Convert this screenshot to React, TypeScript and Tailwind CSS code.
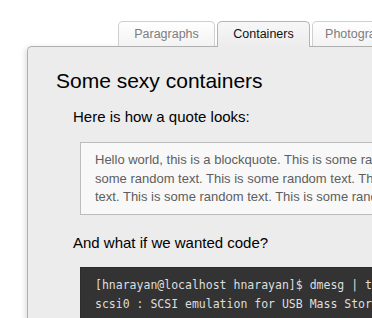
import React from 'react';

const tabs = [
  { label: 'Paragraphs', active: false, w: 'w-[97px]' },
  { label: 'Containers', active: true, w: 'w-[93px]' },
  { label: 'Photographs', active: false, w: 'w-[97px]' },
];

const quoteLines = [
  'Hello world, this is a blockquote. This is some random text. This is',
  'some random text. This is some random text. This is some random',
  'text. This is some random text. This is some random text.',
];

const codeLines = [
  '[hnarayan@localhost hnarayan]$ dmesg | tail',
  'scsi0 : SCSI emulation for USB Mass Storage devices',
];

export default function App() {
  return (
    <div className="w-[372px] h-[318px] overflow-hidden bg-white pt-[21px] pl-[27px] font-['Liberation_Sans',Arial,sans-serif]">
      {/* Tabs */}
      <div className="relative z-10 flex items-start gap-[2px] pl-[91px] -mb-px">
        {tabs.map((t) => (
          <div
            key={t.label}
            className={`${t.w} shrink-0 rounded-t-[5px] border border-b-0 text-center text-[12.5px] leading-[24px] whitespace-nowrap ${
              t.active
                ? 'h-[26px] border-[#b4b4b4] bg-gradient-to-b from-[#f7f7f7] to-[#ececec] text-[#111]'
                : 'h-[25px] border-[#cfcfcf] bg-gradient-to-b from-white to-[#f3f3f3] text-[#7d7d7d]'
            }`}
          >
            {t.label}
          </div>
        ))}
      </div>

      {/* Panel */}
      <div className="w-[420px] h-[300px] rounded-tl-[5px] border-l border-t border-[#b0b0b0] bg-[#ececec] shadow-[-2px_1px_5px_rgba(0,0,0,0.12)] pl-[28px] pt-[22px]">
        <h1 className="text-[21px] leading-[24px] text-black">Some sexy containers</h1>

        <div className="pl-[17px]">
          <h3 className="mt-[14px] text-[15px] leading-[20px] text-black">Here is how a quote looks:</h3>

          <blockquote className="ml-[7px] mt-[15px] border border-[#bdbdbd] bg-[#f8f8f8] pl-[14px] pt-[8px] pb-[7px] text-[13px] leading-[18.5px] text-[#5e5e5e] whitespace-nowrap">
            {quoteLines.map((l) => (
              <div key={l}>{l}</div>
            ))}
          </blockquote>

          <h3 className="mt-[18px] text-[15px] leading-[20px] text-black">And what if we wanted code?</h3>

          <pre className="ml-[7px] mt-[14px] bg-[#333333] border border-[#2c2c2c] pl-[14px] pt-[8px] pb-[8px] font-['DejaVu_Sans_Mono',monospace] text-[11.5px] leading-[19.5px] text-[#dedede]">
            {codeLines.map((l) => (
              <div key={l}>{l}</div>
            ))}
          </pre>
        </div>
      </div>
    </div>
  );
}
